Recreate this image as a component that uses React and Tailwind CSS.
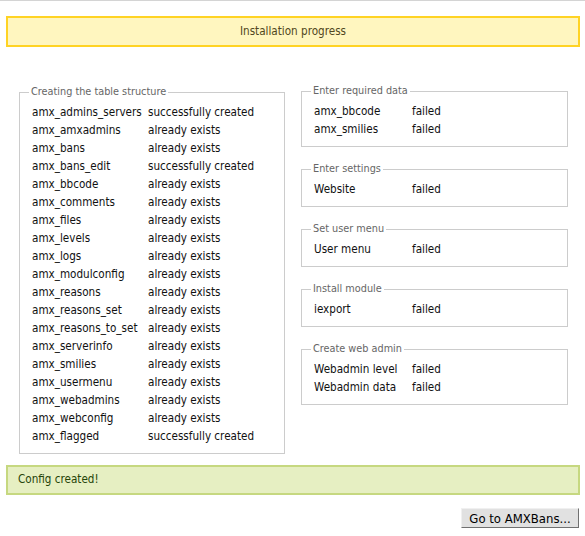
import React from 'react';

const tables = [
  ['amx_admins_servers', 'successfully created'],
  ['amx_amxadmins', 'already exists'],
  ['amx_bans', 'already exists'],
  ['amx_bans_edit', 'successfully created'],
  ['amx_bbcode', 'already exists'],
  ['amx_comments', 'already exists'],
  ['amx_files', 'already exists'],
  ['amx_levels', 'already exists'],
  ['amx_logs', 'already exists'],
  ['amx_modulconfig', 'already exists'],
  ['amx_reasons', 'already exists'],
  ['amx_reasons_set', 'already exists'],
  ['amx_reasons_to_set', 'already exists'],
  ['amx_serverinfo', 'already exists'],
  ['amx_smilies', 'already exists'],
  ['amx_usermenu', 'already exists'],
  ['amx_webadmins', 'already exists'],
  ['amx_webconfig', 'already exists'],
  ['amx_flagged', 'successfully created'],
];

const steps = [
  { title: 'Enter required data', rows: [['amx_bbcode', 'failed'], ['amx_smilies', 'failed']] },
  { title: 'Enter settings', rows: [['Website', 'failed']] },
  { title: 'Set user menu', rows: [['User menu', 'failed']] },
  { title: 'Install module', rows: [['iexport', 'failed']] },
  { title: 'Create web admin', rows: [['Webadmin level', 'failed'], ['Webadmin data', 'failed']] },
];

const Box = ({ title, rows, labelWidth, className }) => (
  <fieldset className={`border border-[#cccccc] px-[12px] pb-[8px] pt-[4px] ${className || ''}`}>
    <legend className="ml-[-3px] px-[2px] text-[10.8px] text-[#666666] leading-[14px]">{title}</legend>
    {rows.map(([name, status]) => (
      <div key={name} className="flex h-[18px] leading-[18px] text-[#111111]">
        <span className={labelWidth}>{name}</span>
        <span>{status}</span>
      </div>
    ))}
  </fieldset>
);

const App = () => {
  return (
    <div
      className="min-h-screen bg-white border-t border-[#d4d4d4] text-[11.6px]"
      style={{ fontFamily: '"DejaVu Sans Condensed", "DejaVu Sans", sans-serif' }}
    >
      <div className="ml-[6px] mr-[5px] mt-[15px] h-[31px] border-2 border-[#ffd324] bg-[#fff6bf] text-[#514721] flex items-center justify-center">
        Installation progress
      </div>

      <div className="flex items-start gap-[16px] pl-[19px] mt-[38px]">
        <Box title="Creating the table structure" rows={tables} labelWidth="w-[116px] shrink-0" className="w-[266px]" />
        <div className="w-[267px] flex flex-col gap-[15px] -mt-[1px]">
          {steps.map((s) => (
            <Box key={s.title} title={s.title} rows={s.rows} labelWidth="w-[98px] shrink-0" />
          ))}
        </div>
      </div>

      <div className="ml-[6px] mr-[5px] mt-[11px] h-[30px] border-2 border-[#c6d880] bg-[#e6efc2] text-[#264409] flex items-center pl-[10px]">
        Config created!
      </div>

      <div className="flex justify-end mr-[6px] mt-[13px]">
        <button className="h-[20px] w-[118px] bg-[#e1e1e1] border border-t-[#f0f0f0] border-l-[#f0f0f0] border-r-[#707070] border-b-[#707070] text-[13px] text-black leading-none">
          Go to AMXBans...
        </button>
      </div>
    </div>
  );
};

export default App;
